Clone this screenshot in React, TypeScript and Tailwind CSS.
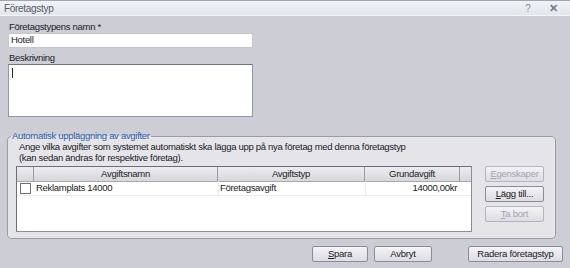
import React from "react";

const font = { fontFamily: '"Liberation Sans", Arial, sans-serif' };

function Btn({
  children,
  disabled,
  className = "",
}: {
  children: React.ReactNode;
  disabled?: boolean;
  className?: string;
}) {
  return (
    <button
      className={`h-[16px] rounded-[2px] border text-[9.5px] tracking-[-0.25px] leading-none flex items-center justify-center bg-gradient-to-b from-[#f4f4f6] to-[#dcdce2] ${
        disabled ? "border-[#b4b4be] text-[#a3a3b0]" : "border-[#8c8c98] text-[#222]"
      } ${className}`}
    >
      {children}
    </button>
  );
}

export default function App() {
  return (
    <div
      className="w-[570px] h-[268px] bg-[#cdcdd6] flex flex-col overflow-hidden text-[#1a1a1a] text-[9.5px] tracking-[-0.3px]"
      style={font}
    >
      {/* Title bar */}
      <div className="h-[16px] shrink-0 flex items-center border-t border-[#a4a4ac] border-b border-b-[#f2f4f8] bg-gradient-to-b from-[#f0f3f7] to-[#e2e6ed] px-[4px]">
        <span className="text-[10px] text-[#5a5a64]">Företagstyp</span>
        <span className="ml-auto text-[10px] text-[#8a8a94] w-[10px]">?</span>
        <span className="ml-[14px] mr-[8px] text-[11px] text-[#7a7a84] font-bold">✕</span>
      </div>

      {/* Form */}
      <div className="flex flex-col pl-[8px] pt-[5px]">
        <div className="h-[12px] leading-[12px] pl-[1px]">Företagstypens namn *</div>
        <div className="w-[245px] h-[15px] bg-white border border-[#c6c6ce] flex items-center pl-[2px]">
          Hotell
        </div>
        <div className="h-[12px] leading-[12px] mt-[4px] pl-[1px]">Beskrivning</div>
        <div className="w-[245px] h-[53px] bg-white border border-[#8e98a8] border-t-[#6c7486] pl-[3px] pt-[3px]">
          <div className="w-[1px] h-[10px] bg-[#222]" />
        </div>
      </div>

      <fieldset className="mt-[13px] ml-[7px] w-[549px] h-[109px] shrink-0 border border-[#9c9ca6] rounded-[4px] bg-[#e5e5e9] px-[8px] pb-[4px] min-w-0">
        <legend className="text-[#2a5ea8] px-[1px] ml-[-5px] leading-[12px]">
          Automatisk uppläggning av avgifter
        </legend>
        <div className="leading-[11px] mt-[-1px] pl-[3px]">
          Ange vilka avgifter som systemet automatiskt ska lägga upp på nya företag med denna företagstyp
          <br />
          (kan sedan ändras för respektive företag).
        </div>
        <div className="flex mt-[3px]">
          {/* Grid */}
          <div className="w-[456px] h-[66px] bg-white border border-[#8c8c96] border-l-[#6e6e78] border-t-[#6e6e78] flex flex-col">
            <div className="h-[15px] flex bg-gradient-to-b from-[#ececf0] to-[#d6d6dc] border-b border-[#a8a8b2] text-[#222]">
              <div className="w-[17px] border-r border-[#9a9aa4]" />
              <div className="w-[184px] border-r border-[#9a9aa4] flex items-center justify-center">Avgiftsnamn</div>
              <div className="w-[147px] border-r border-[#9a9aa4] flex items-center justify-center">Avgiftstyp</div>
              <div className="w-[95px] border-r border-[#9a9aa4] flex items-center justify-center">Grundavgift</div>
              <div className="flex-1" />
            </div>
            <div className="h-[14px] flex items-center border-b border-[#ececf0]">
              <div className="w-[17px] flex justify-center">
                <div className="w-[11px] h-[11px] border border-[#6e6e78] bg-white" />
              </div>
              <div className="w-[184px] pl-[2px]">Reklamplats 14000</div>
              <div className="w-[147px] pl-[1px] border-l border-[#ececf0]">Företagsavgift</div>
              <div className="w-[95px] text-right pr-[3px] border-l border-[#ececf0]">14000,00kr</div>
            </div>
          </div>
          <div className="flex flex-col gap-[4px] ml-[13px]">
            <Btn disabled className="w-[59px]">
              <span><u>E</u>genskaper</span>
            </Btn>
            <Btn className="w-[59px]">
              <span><u>L</u>ägg till...</span>
            </Btn>
            <Btn disabled className="w-[59px]">
              <span><u>T</u>a bort</span>
            </Btn>
          </div>
        </div>
      </fieldset>

      {/* Bottom buttons */}
      <div className="flex mt-[7px] pl-[312px]">
        <Btn className="w-[56px]">
          <span><u>S</u>para</span>
        </Btn>
        <Btn className="w-[58px] ml-[6px]">Avbryt</Btn>
        <Btn className="w-[95px] ml-[36px]">Radera företagstyp</Btn>
      </div>
    </div>
  );
}
